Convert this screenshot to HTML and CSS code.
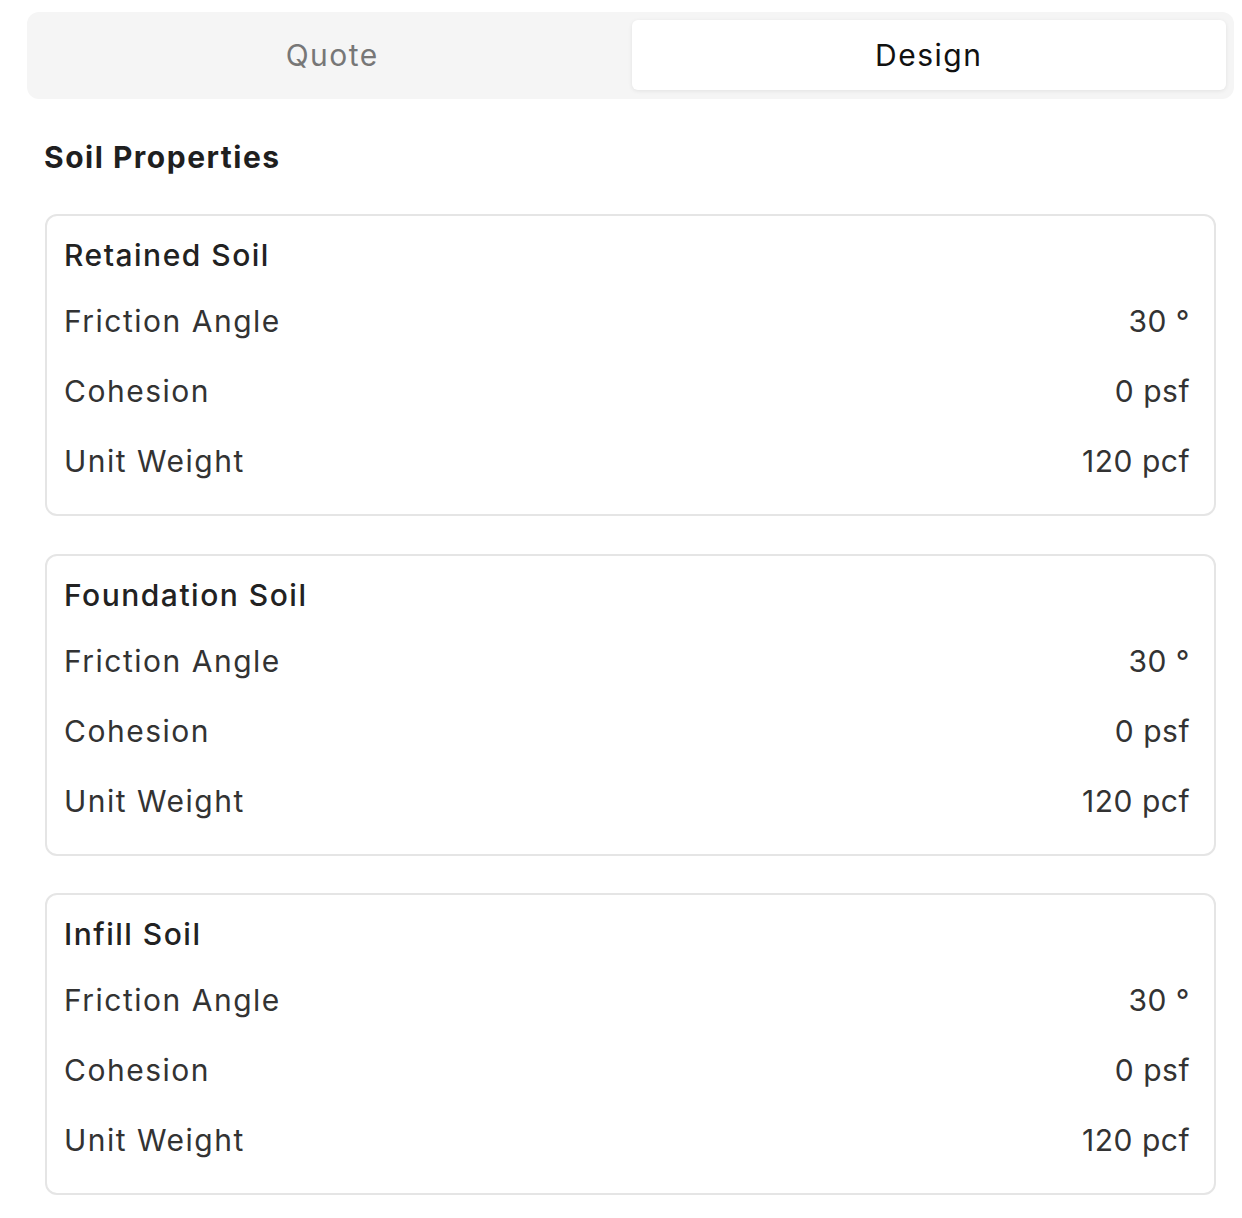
FILE: index.html
```html
<!DOCTYPE html>
<html>
<head>
<meta charset="utf-8">
<link rel="stylesheet" href="styles.css">
</head>
<body>
<div class="page">
  <div class="tabs">
    <div class="tab">Quote</div>
    <div class="tab active">Design</div>
  </div>
  <h2 class="heading">Soil Properties</h2>

  <div class="card">
    <div class="card-title">Retained Soil</div>
    <div class="row"><span class="label">Friction Angle</span><span class="value">30 °</span></div>
    <div class="row"><span class="label">Cohesion</span><span class="value">0 psf</span></div>
    <div class="row"><span class="label">Unit Weight</span><span class="value">120 pcf</span></div>
  </div>

  <div class="card">
    <div class="card-title">Foundation Soil</div>
    <div class="row"><span class="label">Friction Angle</span><span class="value">30 °</span></div>
    <div class="row"><span class="label">Cohesion</span><span class="value">0 psf</span></div>
    <div class="row"><span class="label">Unit Weight</span><span class="value">120 pcf</span></div>
  </div>

  <div class="card">
    <div class="card-title">Infill Soil</div>
    <div class="row"><span class="label">Friction Angle</span><span class="value">30 °</span></div>
    <div class="row"><span class="label">Cohesion</span><span class="value">0 psf</span></div>
    <div class="row"><span class="label">Unit Weight</span><span class="value">120 pcf</span></div>
  </div>
</div>
</body>
</html>
```
FILE: styles.css
```css
html, body {
  margin: 0;
  padding: 0;
  background: #ffffff;
}

body {
  font-family: "Inter", "Open Sans", sans-serif;
  font-size: 30px;
  letter-spacing: 1.5px;
  color: #333333;
}

.page {
  padding: 12px 8px 0 27px;
}

.tabs {
  display: flex;
  gap: 2px;
  padding: 8px 8px 9px 8px;
  background: #f5f5f5;
  border-radius: 12px;
}

.tab {
  flex: 1;
  height: 70px;
  display: flex;
  align-items: center;
  justify-content: center;
  color: #777777;
  border-radius: 6px;
}

.tab.active {
  background: #ffffff;
  color: #111111;
  box-shadow: 0 1px 4px rgba(0, 0, 0, 0.08);
}

.heading {
  margin: 38px 0 37px 17px;
  height: 40px;
  line-height: 40px;
  font-size: 30px;
  font-weight: 700;
  color: #1f1f1f;
}

.card {
  margin: 0 18px 37.5px 18px;
  border: 2px solid #e5e5e5;
  border-radius: 12px;
  padding: 14px 24px 18px 17px;
}

.card-title {
  height: 50px;
  line-height: 50px;
  margin-bottom: 6px;
  font-weight: 500;
  color: #222222;
}

.row {
  height: 70px;
  display: flex;
  align-items: center;
  justify-content: space-between;
  color: #333333;
}

.value {
  letter-spacing: 0.5px;
}
```
